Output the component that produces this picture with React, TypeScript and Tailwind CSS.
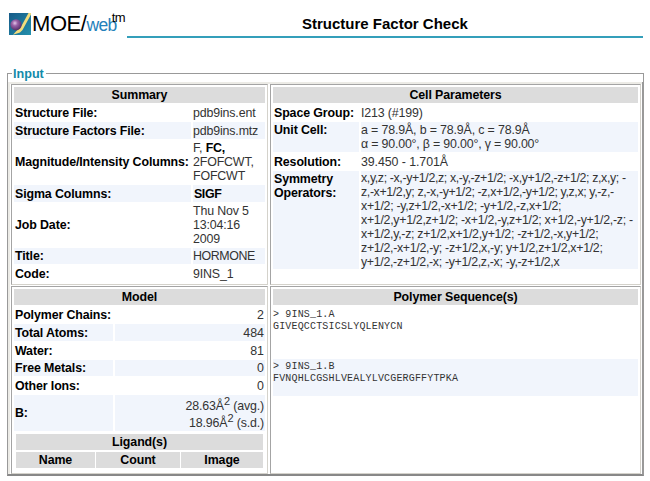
import React from "react";

function Header({ children, className = "" }: { children: React.ReactNode; className?: string }) {
  return (
    <div className={`h-4 bg-[#dcdcdc] text-center text-[12.4px] font-bold leading-[17px] tracking-[-0.1px] text-black ${className}`}>{children}</div>
  );
}

function Panel({ children, className = "" }: { children: React.ReactNode; className?: string }) {
  return (
    <div className={`border border-b-[#d4d2cb] border-l-[#a4a4a4] border-r-[#d4d2cb] border-t-[#a4a4a4] ${className}`}>
      {children}
    </div>
  );
}

type RowProps = {
  label: string;
  height: string;
  labelWidth: string;
  shaded?: boolean;
  labelClass?: string;
  valueClass?: string;
  children: React.ReactNode;
};

function Row({ label, height, labelWidth, shaded, labelClass = "items-center", valueClass = "tracking-[-0.15px]", children }: RowProps) {
  const fill = shaded ? "bg-[#f1f5fc]" : "";
  return (
    <div className={`flex gap-[2px] ${height}`}>
      <div className={`flex shrink-0 whitespace-nowrap pl-[1px] font-bold tracking-[-0.11px] text-black ${labelWidth} ${fill} ${labelClass}`}>
        <span className="whitespace-pre">{label}</span>
      </div>
      <div className={`flex min-w-0 flex-1 flex-col justify-center whitespace-nowrap ${fill} ${valueClass}`}>{children}</div>
    </div>
  );
}

const operators = [
  { text: "x,y,z; -x,-y+1/2,z; x,-y,-z+1/2; -x,y+1/2,-z+1/2; z,x,y; -", spacing: "tracking-[-0.38px]" },
  { text: "z,-x+1/2,y; z,-x,-y+1/2; -z,x+1/2,-y+1/2; y,z,x; y,-z,-", spacing: "tracking-[-0.38px]" },
  { text: "x+1/2; -y,z+1/2,-x+1/2; -y+1/2,-z,x+1/2;", spacing: "tracking-[-0.3px]" },
  { text: "x+1/2,y+1/2,z+1/2; -x+1/2,-y,z+1/2; x+1/2,-y+1/2,-z; -", spacing: "tracking-[-0.3px]" },
  { text: "x+1/2,y,-z; z+1/2,x+1/2,y+1/2; -z+1/2,-x,y+1/2;", spacing: "tracking-[-0.31px]" },
  { text: "z+1/2,-x+1/2,-y; -z+1/2,x,-y; y+1/2,z+1/2,x+1/2;", spacing: "tracking-[-0.32px]" },
  { text: "y+1/2,-z+1/2,-x; -y+1/2,z,-x; -y,-z+1/2,x", spacing: "tracking-[-0.33px]" },
];

function Logo() {
  return (
    <div className="flex h-[38px] w-[118px] items-start pt-[13px]">
      <svg className="h-[22px] w-[22px] shrink-0" viewBox="0 0 22 22">
        <defs>
          <linearGradient id="tile" x1="0" y1="0" x2="1" y2="1">
            <stop offset="0" stopColor="#165a88" />
            <stop offset="1" stopColor="#2490ac" />
          </linearGradient>
          <radialGradient id="ball" cx=".4" cy=".35" r=".7">
            <stop offset="0" stopColor="#e2c6e8" />
            <stop offset=".35" stopColor="#9a62a8" />
            <stop offset="1" stopColor="#4a2860" />
          </radialGradient>
        </defs>
        <rect width="22" height="22" fill="url(#tile)" />
        <path d="M19.5 0H22v1.5L13.5 17 11 19.5 4 21.8l4.5-5 3.5-3z" fill="#f3dd7c" />
        <circle cx="7" cy="11.8" r="5.6" fill="url(#ball)" />
      </svg>
      <div className="flex items-baseline whitespace-nowrap pl-[1px] leading-[22px]">
        <span className="text-[22px] tracking-[-0.45px] text-black">MOE/</span>
        <span className="text-[17.5px] tracking-[-0.6px] text-[#2581bb]">web</span>
        <span className="relative top-[-9px] -ml-[5px] text-[13px] leading-none tracking-[-0.5px] text-black">tm</span>
      </div>
    </div>
  );
}

export default function App() {
  return (
    <main className="h-[481px] w-[650px] overflow-hidden bg-white font-['Liberation_Sans',Arial,sans-serif] text-[12.4px] leading-[14px] text-[#333]">
      <header className="flex h-[38px] pl-[9px]">
        <Logo />
        <div className="h-[38px] w-[516px] border-b-2 border-[#349fba] pl-[175px] pt-[15px] text-[15px] font-bold leading-[18px] text-black">
          Structure Factor Check
        </div>
      </header>

      <section className="ml-[7px] mt-[28px] flex w-[637px] flex-col">
        <div className="flex h-4 items-center">
          <div className="h-[9px] w-[5px] shrink-0 self-end border-l border-t border-[#999]" />
          <h2 className="w-[34px] whitespace-nowrap pl-[1px] text-[12.6px] font-bold leading-4 text-[#138aaa]">Input</h2>
          <div className="h-[9px] flex-1 self-end border-r border-t border-[#999]" />
        </div>
        <div className="flex h-[394px] w-[637px] flex-col gap-[1px] border-b-2 border-l border-r-2 border-b-[#888] border-l-[#999] border-r-[#999] shadow-[inset_2px_2px_0_#ecebe6]">
          <div className="ml-[3px] mt-[2px] flex h-[201px] gap-[2px]">
            <Panel className="w-[257px] px-[2px] pt-[2px]">
              <Header>Summary</Header>
              <div className="mt-[2px] flex flex-col gap-px">
                <Row label="Structure File:" height="h-4" labelWidth="w-[177px]">pdb9ins.ent</Row>
                <Row label="Structure Factors File:" height="h-[17px]" labelWidth="w-[177px]" shaded>pdb9ins.mtz</Row>
                <Row label="Magnitude/Intensity Columns:" height="h-11" labelWidth="w-[177px]">
                  <span>F, <b className="text-black">FC,</b></span>
                  <span>2FOFCWT,</span>
                  <span>FOFCWT</span>
                </Row>
                <Row label="Sigma Columns:" height="h-[17px]" labelWidth="w-[177px]" shaded valueClass="pl-px tracking-[-0.4px]"><b className="text-black">SIGF</b></Row>
                <Row label="Job Date:" height="h-11" labelWidth="w-[177px]">
                  <span>Thu Nov 5</span>
                  <span>13:04:16</span>
                  <span>2009</span>
                </Row>
                <Row label="Title:" height="h-4" labelWidth="w-[177px]" shaded valueClass="tracking-[-0.4px]">HORMONE</Row>
                <Row label="Code:" height="h-[17px]" labelWidth="w-[177px]">9INS_1</Row>
              </div>
            </Panel>
            <Panel className="w-[371px] px-[2px] pt-[2px]">
              <Header>Cell Parameters</Header>
              <div className="mt-[2px] flex flex-col gap-px">
                <Row label="Space Group:" height="h-4" labelWidth="w-[86px]">I213 (#199)</Row>
                <Row label="Unit Cell:" height="h-[30px]" labelWidth="w-[86px]" shaded labelClass="items-start pt-[1px]">
                  <span>a = 78.9Å, b = 78.9Å, c = 78.9Å</span>
                  <span className="tracking-[-0.19px]">α = 90.00°, β = 90.00°, γ = 90.00°</span>
                </Row>
                <Row label="Resolution:" height="h-[17px]" labelWidth="w-[86px]" valueClass="tracking-[-0.08px]">39.450 - 1.701Å</Row>
                <Row label={"Symmetry\nOperators:"} height="h-[98px]" labelWidth="w-[86px]" shaded labelClass="items-start pt-px">
                  {operators.map(({ text, spacing }) => <span key={text} className={spacing}>{text}</span>)}
                </Row>
              </div>
            </Panel>
          </div>
          <div className="ml-[3px] flex h-[188px] gap-[2px]">
            <Panel className="w-[257px] px-[2px] pt-[2px]">
              <Header>Model</Header>
              <div className="mt-[2px] flex flex-col gap-px text-right">
                <Row label="Polymer Chains:" height="h-4" labelWidth="w-[99px]" valueClass="pr-px">2</Row>
                <Row label="Total Atoms:" height="h-[17px]" labelWidth="w-[99px]" valueClass="pr-px" shaded>484</Row>
                <Row label="Water:" height="h-[17px]" labelWidth="w-[99px]" valueClass="pr-px">81</Row>
                <Row label="Free Metals:" height="h-4" labelWidth="w-[99px]" valueClass="pr-px" shaded>0</Row>
                <Row label="Other Ions:" height="h-[17px]" labelWidth="w-[99px]" valueClass="pr-px">0</Row>
                <Row label="B:" height="h-9" labelWidth="w-[99px]" valueClass="pr-px pt-[4px] tracking-[-0.15px]" shaded>
                  <span className="leading-[17px]">28.63Å<sup className="top-[-5px] text-[11px]">2</sup> (avg.)</span>
                  <span className="leading-[17px]">18.96Å<sup className="top-[-5px] text-[11px]">2</sup> (s.d.)</span>
                </Row>
              </div>
              <div className="mx-[2px] mt-[3px] flex flex-col gap-[2px]">
                <Header>Ligand(s)</Header>
                <div className="flex gap-[1px]">
                  <Header className="w-[79px]">Name</Header>
                  <Header className="w-[84px]">Count</Header>
                  <Header className="w-[82px]">Image</Header>
                </div>
              </div>
            </Panel>
            <Panel className="w-[371px] px-[2px] pt-[2px]">
              <Header>Polymer Sequence(s)</Header>
              <div className="font-['Liberation_Mono','Courier_New',monospace] text-[10px] leading-3 tracking-[0.17px]">
                <div className="h-[54px] pt-[4px]">&gt; 9INS_1.A<br />GIVEQCCTSICSLYQLENYCN</div>
                <div className="h-[37px] bg-[#f1f5fc] pt-[2px]">&gt; 9INS_1.B<br />FVNQHLCGSHLVEALYLVCGERGFFYTPKA</div>
              </div>
            </Panel>
          </div>
        </div>
      </section>
    </main>
  );
}
